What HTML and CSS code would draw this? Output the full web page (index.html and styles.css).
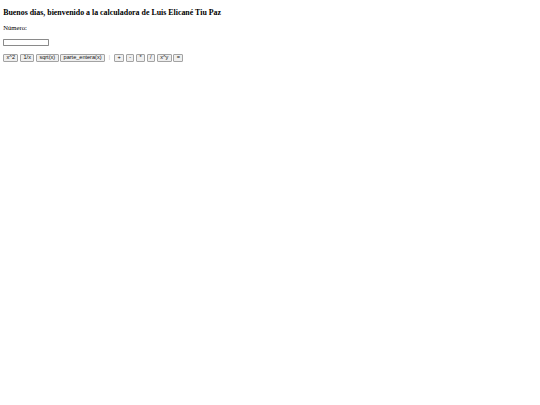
FILE: index.html
```html
<!DOCTYPE html>
<html lang="es">
<head>
<meta charset="utf-8">
<title>Calculadora</title>
<link rel="stylesheet" href="styles.css">
</head>
<body>
<h3 class="title">Buenos días, bienvenido a la calculadora de Luis Elicané Tiu Paz</h3>
<p class="label">Número:</p>
<div class="field"><input class="num" type="text"></div>
<div class="ops">
  <button class="btn">x^2</button>
  <button class="btn">1/x</button>
  <button class="btn">sqrt(x)</button>
  <button class="btn">parte_entera(x)</button>
  <span class="sep">|</span>
  <button class="btn">+</button>
  <button class="btn">-</button>
  <button class="btn">*</button>
  <button class="btn">/</button>
  <button class="btn">x^y</button>
  <button class="btn">=</button>
</div>
</body>
</html>
```
FILE: styles.css
```css
html, body {
  background: #ffffff;
}
body {
  margin: 3.2px;
  font-family: "Liberation Serif", "Times New Roman", serif;
  font-size: 6.7px;
  color: #000000;
}
.title {
  font-size: 7.9px;
  font-weight: bold;
  margin: 4.8px 0 7.4px 0;
  line-height: normal;
}
.label {
  margin: 0;
  line-height: normal;
}
.field {
  margin-top: 7.2px;
  display: flex;
}
.num {
  box-sizing: border-box;
  width: 46px;
  height: 7.8px;
  margin: 0;
  padding: 0 1px;
  border: 0.8px solid #8a8a8a;
  border-radius: 0.8px;
  background: #ffffff;
  font-size: 5.3px;
}
.ops {
  margin-top: 7.2px;
  display: flex;
  align-items: center;
  gap: 1.7px;
}
.btn {
  box-sizing: border-box;
  height: 8.4px;
  margin: 0;
  padding: 0 2.4px;
  border: 0.8px solid #a3a3a3;
  border-radius: 1px;
  background: #efefef;
  color: #111111;
  font-family: "Liberation Sans", Arial, sans-serif;
  font-size: 5.55px;
  line-height: 1;
}
.sep {
  margin: 0 2.2px;
  color: #a0a0a0;
  font-size: 6.8px;
  line-height: 1;
}
```
